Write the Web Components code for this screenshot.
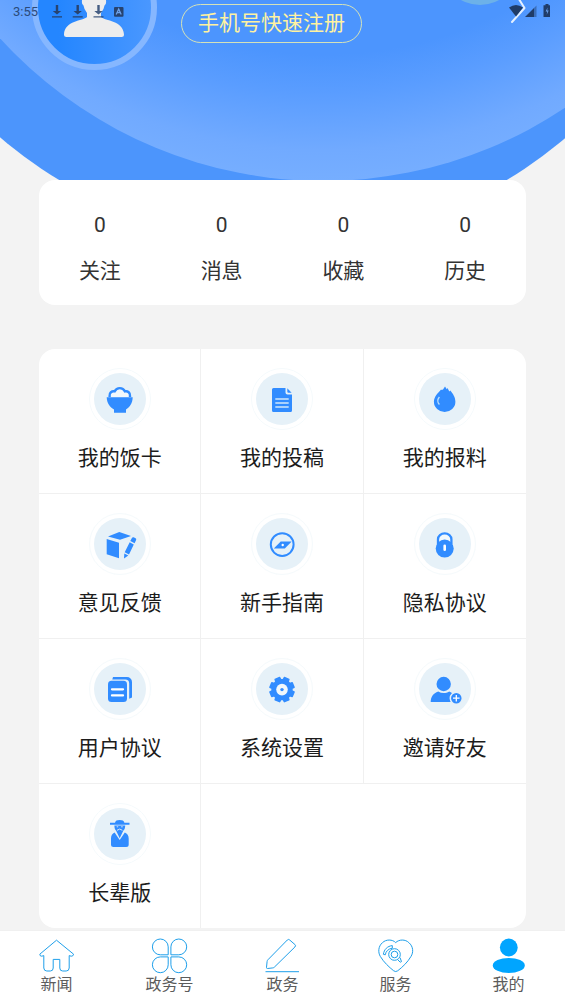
<!DOCTYPE html>
<html lang="zh-CN">
<head>
<meta charset="utf-8">
<meta name="viewport" content="width=device-width, initial-scale=1">
<title>我的</title>
<style>
  body {
    margin: 0;
    background: #f3f3f3;
    color: #333;
    font-family: Roboto, "Noto Sans CJK SC", sans-serif;
  }
</style>
</head>
<body>
<my-page>
  <status-bar slot="status" time="3:55"></status-bar>
  <profile-hero slot="hero">手机号快速注册</profile-hero>
  <stats-card slot="stats">
    <stat-item value="0">关注</stat-item>
    <stat-item value="0">消息</stat-item>
    <stat-item value="0">收藏</stat-item>
    <stat-item value="0">历史</stat-item>
  </stats-card>
  <menu-grid slot="menu">
    <menu-item icon="bowl">我的饭卡</menu-item>
    <menu-item icon="doc">我的投稿</menu-item>
    <menu-item icon="flame">我的报料</menu-item>
    <menu-item icon="box">意见反馈</menu-item>
    <menu-item icon="compass">新手指南</menu-item>
    <menu-item icon="lock">隐私协议</menu-item>
    <menu-item icon="pages">用户协议</menu-item>
    <menu-item icon="gear">系统设置</menu-item>
    <menu-item icon="invite">邀请好友</menu-item>
    <menu-item icon="elder">长辈版</menu-item>
  </menu-grid>
  <tab-bar slot="tabs">
    <tab-item icon="home">新闻</tab-item>
    <tab-item icon="clover">政务号</tab-item>
    <tab-item icon="pen">政务</tab-item>
    <tab-item icon="heart">服务</tab-item>
    <tab-item icon="me" current>我的</tab-item>
  </tab-bar>
</my-page>

<script>
const B = '#318cff', L = '#e6f1f8';

const gear = (() => {
  const n = 8, pts = [];
  for (let i = 0; i < n; i++) {
    const a = (i + 0.5) * 2 * Math.PI / n;
    for (const [d, r] of [[-0.27, 10], [-0.2, 12.3], [0.2, 12.3], [0.27, 10]])
      pts.push((32 + r * Math.cos(a + d)).toFixed(2) + ',' + (32.6 + r * Math.sin(a + d)).toFixed(2));
  }
  return pts.join(' ');
})();

const MENU_ICONS = {
  bowl: `<path d="M21.6 30v-1.2a4 4 0 0 1 5-4.4 5.800 5.800 0 0 1 10.400 0 4 4 0 0 1 5 4.400V30" fill="#f1f8fc" stroke="${B}" stroke-width="2.4"/>
    <path d="M18.700 30.300h26c-.2 6.200-3 10-6.700 12.200v3.200H26v-3.200c-4-2.200-7.100-6-7.300-12.200z" fill="${B}"/>`,
  doc: `<path d="M23.500 21h12v4.500a2 2 0 0 0 2 2H42V43.500a1.500 1.500 0 0 1-1.500 1.500h-17a1.500 1.500 0 0 1-1.500-1.500v-21a1.500 1.500 0 0 1 1.500-1.500z" fill="${B}"/>
    <path d="M37.300 21.300l4.300 4.400h-3.300a1 1 0 0 1-1-1z" fill="${B}"/>
    <path d="M25.300 32h13.400M25.300 36h13.400M25.300 40h13.400" stroke="#cfe6fb" stroke-width="1.700"/>`,
  flame: `<path d="M30 22.500l2-3.100 1.800 2.800.7-1.200 1.800 3.600 1-1.200c2.700 3.400 5.100 6.600 5.100 11.400a10.700 10.100 0 0 1-21.500 0c0-5 3.600-8.500 7.200-12.400l.6.700z" fill="${B}"/>
    <path d="M26.400 30c-2 2.300-2 5.600 0 7.600" fill="none" stroke="#bfe0fb" stroke-width="1.400"/>`,
  box: `<path d="M20 24.500L31.300 20 43 24l-11 3.700zM18.700 27L31 30.700v15.600l-12.300-4zM45.600 25.300l2 .9q1 .6.5 1.700l-1.500 3.400-4.300-2.200 1.600-3.200q.6-1 1.700-.6zM41.700 30.300l4.100 2.100-4.800 10-4.300-2.100zM36.300 41.600l4 2-4.300 2.800z" fill="${B}"/>`,
  compass: `<circle cx="32.200" cy="32.600" r="11.400" fill="none" stroke="${B}" stroke-width="2"/>
    <path d="M23.800 36.400l6.900-6.800h11l-6.900 6.800z" fill="${B}"/><circle cx="32.700" cy="33" r="1.200" fill="#fff"/>`,
  lock: `<path d="M25 32v-4.700a6.700 6 0 0 1 13.400 0V32" fill="#f1f8fc" stroke="${B}" stroke-width="2.300"/>
    <circle cx="31.700" cy="36.600" r="9" fill="${B}"/><rect x="30.400" y="32.500" width="2.600" height="6.600" rx="1.300" fill="#fff"/>`,
  pages: `<path d="M25 20h14a5 5 0 0 1 5 5v15.500l-2.800 1.300V26.500a4 4 0 0 0-4-4H24.300z" fill="${B}"/>
    <rect x="20" y="23.700" width="19" height="21.400" rx="3.500" fill="${B}"/>
    <path d="M24 32.300h11M24 38.400h11" stroke="#fff" stroke-width="2.300" stroke-linecap="round"/>`,
  gear: `<polygon points="${gear}" fill="${B}" stroke="${B}" stroke-width="1.500" stroke-linejoin="round"/>
    <circle cx="32" cy="32.600" r="5.800" fill="#f1f8fc"/><circle cx="32" cy="32.600" r="1.700" fill="${B}"/>`,
  invite: `<circle cx="30.700" cy="27" r="7.200" fill="${B}"/>
    <path d="M17.700 45c0-5 2.500-9 7.500-10.600 3.500 2 7.500 2 11 0 1.500.5 2.600 1.300 3.500 2.300L38 45z" fill="${B}"/>
    <circle cx="43.300" cy="41.200" r="6" fill="${B}" stroke="${L}" stroke-width="1.500"/>
    <path d="M40 41.200h6.600M43.300 37.900v6.600" stroke="#fff" stroke-width="1.300"/>`,
  elder: `<path d="M27 20.700c.4-2 2-2.700 4.700-2.700s4.300.7 4.700 2.700h5.100v2H22v-2z" fill="${B}"/>
    <path d="M26.400 23.400h10.800c0 2.400-.7 4.300-1.800 5.200l-3.700 7.700-3.700-7.700c-1-.9-1.600-2.800-1.600-5.200z" fill="${B}"/>
    <path d="M28.700 24.800h1.500M33.200 24.800h1.500M29 28.300q2.700-2.500 5.400 0" fill="none" stroke="${L}" stroke-width=".9"/>
    <path d="M26.600 30.500l5.100 7.500 5.100-7.500c2.500 1 3.900 3 3.900 6V42.500a2.500 2.500 0 0 1-2.500 2.500H25.500a2.500 2.500 0 0 1-2.500-2.500v-6c0-3 1.200-5 3.600-6z" fill="${B}"/>`
};

const TAB_ICONS = {
  home: `<path d="M18.500 3.200L1.800 17.200q.2 2.400 2 2l2-.6V31q.2 3 3 3h3.500q2.900 0 2.900-3v-8.600h6.600V31q0 3 2.900 3h3.500q2.800 0 3-3V18.600l2 .6q1.800.4 2.400-2z"/>`,
  clover: `<path d="M17.200 17.800V9.900a7.900 7.900 0 1 0-7.900 7.900zM19.900 17.800V9.900a7.900 7.900 0 1 1 7.900 7.900zM17.200 19.900v7.900a7.900 7.900 0 1 1-7.900-7.900zM19.900 19.900v7.900a7.900 7.900 0 1 0 7.900-7.900z"/>`,
  pen: `<path d="M23.300 3q1.200-1.200 2.400 0l5.200 4.500q1.300 1.200 0 2.500L10.500 30q-.7.800-1.700.9l-5.300.6q-1.200 0-1-1.200l.6-5.800q.1-1 .8-1.700zM1.500 34.700h33.500"/>`,
  heart: `<path d="M18.700 5.600C15.500 2.200 9 2.200 5.500 5.600 1 9.500 1 15.500 3.300 19.400 7 25.500 12 30 16.700 33.800q2 1.500 4 0C25.500 30 30.500 25.500 34 19.400c2.500-3.900 2.500-9.900-2.200-13.800C28.500 2.200 22 2.200 18.700 5.600z"/>
    <circle cx="17.500" cy="17.500" r="5.800"/><circle cx="17.500" cy="17.500" r="3.300"/>
    <path d="M20.500 22.500l2.700 2.700 1.300-.6-1.500-4M6.400 17.300l1.900.5c.5-3.500 3-6 7-6.600V8.600C10.500 9 7 12.500 6.400 17.300z"/>`,
  me: `<g fill="#00a5ff" stroke="none"><circle cx="18.800" cy="10.500" r="8.900"/><ellipse cx="18.800" cy="28.400" rx="16" ry="7.500"/></g>`
};

function define(name, render) {
  customElements.define(name, class extends HTMLElement {
    constructor() {
      super();
      this.attachShadow({ mode: 'open' });
    }
    connectedCallback() {
      this.shadowRoot.innerHTML = render(this);
    }
  });
}

define('my-page', () => `
  <style>
    :host { display: flex; flex-direction: column; min-height: 100vh; position: relative; }
    main { flex: 1; padding-bottom: 2px; }
    slot[name=stats]::slotted(*) { margin: 0 39px 44px; }
    slot[name=menu]::slotted(*) { margin: 0 39px; }
    slot[name=status]::slotted(*) { position: absolute; top: 0; left: 0; right: 0; z-index: 2; }
  </style>
  <slot name="status"></slot>
  <main><slot name="hero"></slot><slot name="stats"></slot><slot name="menu"></slot></main>
  <slot name="tabs"></slot>`);

define('status-bar', el => `
  <style>
    :host { display: flex; justify-content: space-between; align-items: center; height: 24px;
      padding: 0 13px; font-size: 13px; line-height: 24px; color: #2b4a7a; pointer-events: none; }
    .left { display: flex; align-items: center; gap: 12px; }
    svg { display: block; }
  </style>
  <div class="left">
    <span>${el.getAttribute('time')}</span>
    <svg width="76" height="24" viewBox="0 0 76 24" fill="#27436f">
      <path id="d" d="M5.800 5h2.400v6h3L7 14.500 2.800 11h3zM2 16.200h10v1.400H2z"/>
      <use href="#d" x="20.700"/><use href="#d" x="41.500" opacity=".85"/>
      <rect x="64" y="7" width="9.500" height="9.800" rx="1"/>
      <path d="M66.200 14.500l2.500-5.500 2.500 5.500M67.200 12.700h3" fill="none" stroke="#6da3ed" stroke-width="1.300"/>
    </svg>
  </div>
  <svg width="44" height="24" viewBox="0 0 44 24" fill="#203c68">
    <path d="M1 7.500q7-5 14 0L8 16.500z"/>
    <path d="M17 17L26 8v9z"/><path d="M26 8l2.500-2.500V17H26z" opacity=".45"/>
    <path d="M37.500 4h3v1.300H42V17h-6.500V5.300h2z"/><path d="M39.600 7.500l-2 4h1.600l-.5 3.300 2-4.200h-1.500z" fill="#6da3ed"/>
  </svg>`);

define('profile-hero', () => `
  <style>
    :host { display: flex; align-items: flex-start; position: relative; height: 180px; padding: 0 24px 0 32px; box-sizing: border-box; overflow: hidden; }
    svg { display: block; flex: none; position: relative; }
    .bg { position: absolute; inset: 0; width: 100%; height: 100%; }
    button { position: relative; margin: 4px 0 0 24px; padding: 0 16px; height: 39px; box-sizing: border-box;
      border: 1px solid #d5e2b8; border-radius: 20px; background: none; color: #fff2a0;
      font: inherit; font-size: 21px; line-height: 37px; white-space: nowrap; }
    .more { margin-left: auto; }
  </style>
  <svg class="bg" viewBox="0 0 565 180" preserveAspectRatio="none" aria-hidden="true">
    <defs>
      <radialGradient id="g" gradientUnits="userSpaceOnUse" cx="0" cy="0" r="437" gradientTransform="translate(323 -256) scale(1.15 1)">
        <stop offset=".71" stop-color="#4c95fe"/><stop offset=".8" stop-color="#5a9dff"/><stop offset=".93" stop-color="#71aaff"/><stop offset="1" stop-color="#76aeff"/>
      </radialGradient>
    </defs>
    <circle cx="283" cy="-193" r="435" fill="#4c95fc"/>
    <circle cx="323" cy="-256" r="437" fill="url(#g)"/>
  </svg>
  <svg width="125" height="72" viewBox="0 0 125 72" role="img" aria-label="头像">
    <defs><linearGradient id="a"><stop offset=".2" stop-color="#2486ff"/><stop offset="1" stop-color="#4b98ff"/></linearGradient></defs>
    <circle cx="62.500" cy="7.500" r="59.500" fill="url(#a)" stroke="#86b7ff" stroke-width="6"/>
    <path d="M50 0h24q.6 4-1.500 5.500-.5 4-3.500 7.500v4c4 4 22.500 3.500 23 17.500q0 2.500-2.500 2.500h-55q-2.500 0-2.500-2.500C32.500 20.500 51 21 55 17v-4q-3-3.500-3.500-7.500Q49.400 4 50 0z" fill="#ededed"/>
  </svg>
  <button type="button"><slot></slot></button>
  <svg class="more" width="86" height="24" viewBox="0 0 86 24" aria-hidden="true">
    <circle cx="25" cy="-34" r="39" fill="#6cb1e9"/>
    <path d="M62 -4L69.500 8 57 22" fill="none" stroke="#e4f0ff" stroke-width="2" stroke-linecap="round" stroke-linejoin="round"/>
  </svg>`);

define('stats-card', () => `
  <style>
    :host { display: grid; grid-template-columns: repeat(4, 1fr); background: #fff; border-radius: 16px; height: 125px; }
  </style><slot></slot>`);

define('stat-item', el => `
  <style>
    :host { display: flex; flex-direction: column; align-items: center; gap: 16px; padding-top: 30px; font-size: 21px; line-height: 30px; }
    b { font-weight: 400; }
  </style><b>${el.getAttribute('value')}</b><span><slot></slot></span>`);

define('menu-grid', () => `
  <style>
    :host { display: grid; grid-template-columns: repeat(3, 1fr); background: #fff; border-radius: 16px; overflow: hidden; }
    ::slotted(:not(:nth-child(3n))) { border-right: 1px solid #f0f0f0; }
    ::slotted(:not(:nth-child(n+10))) { border-bottom: 1px solid #f0f0f0; }
  </style><slot></slot>`);

define('menu-item', el => `
  <style>
    :host { display: block; height: 144px; color: #1c1c1c; }
    a { display: flex; flex-direction: column; align-items: center; gap: 12px; padding-top: 18px;
      color: inherit; text-decoration: none; font-size: 21px; line-height: 30px; }
    svg { display: block; }
  </style>
  <a href="#${el.getAttribute('icon')}">
    <svg width="64" height="64" viewBox="0 0 64 64" aria-hidden="true">
      <circle cx="32" cy="32" r="30.500" fill="#fff" stroke="#f5fafc"/>
      <circle cx="32" cy="32" r="26" fill="${L}"/>
      ${MENU_ICONS[el.getAttribute('icon')]}
    </svg>
    <span><slot></slot></span>
  </a>`);

define('tab-bar', () => `
  <style>
    :host { display: block; }
    nav { display: grid; grid-template-columns: repeat(5, 1fr); height: 74px; box-sizing: border-box;
      background: #fff; border-top: 1px solid #f0f0f0; }
  </style><nav><slot></slot></nav>`);

define('tab-item', el => `
  <style>
    :host { display: block; }
    a { display: flex; flex-direction: column; align-items: center; padding-top: 6px; color: #5c5c5c;
      text-decoration: none; font-size: 16px; line-height: 20px; }
    svg { display: block; }
  </style>
  <a href="#${el.getAttribute('icon')}"${el.hasAttribute('current') ? ' aria-current="page"' : ''}>
    <svg width="38" height="38" viewBox="0 0 38 38" fill="none" stroke="#1e9fea" aria-hidden="true">${TAB_ICONS[el.getAttribute('icon')]}</svg>
    <span><slot></slot></span>
  </a>`);
</script>
</body>
</html>
